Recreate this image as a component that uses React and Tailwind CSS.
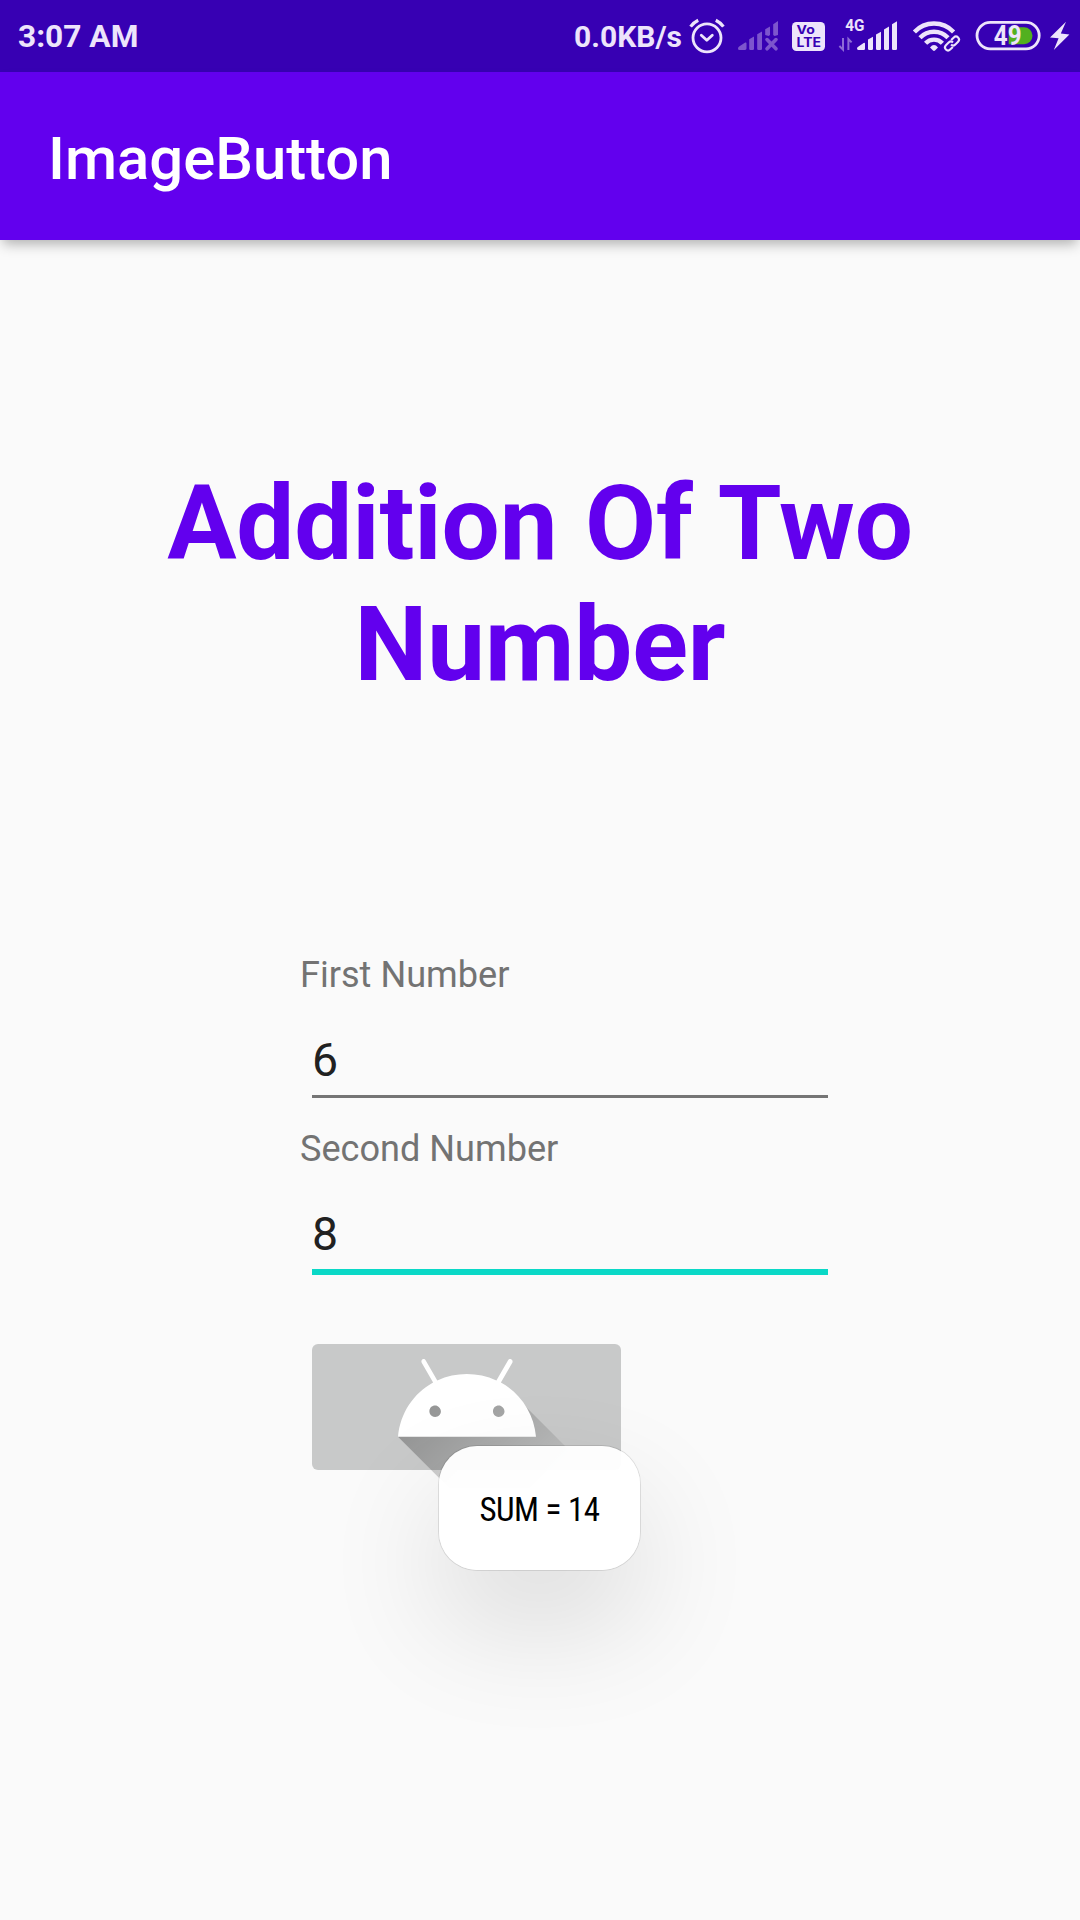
const INK = '#ede4fb';
const DIM = '#7d55cd';
const BAR = '#3700b3';

function AlarmIcon() {
  return (
    <svg className="shrink-0" width="40" height="72" viewBox="687 0 40 72" fill="none" stroke={INK}>
      <circle cx="707" cy="37.8" r="14" strokeWidth="2.8" />
      <path d="M701.3 35.2 L706.8 40.3 L712.3 35.2" strokeWidth="2.8" strokeLinecap="round" strokeLinejoin="round" />
      <path d="M690.6 26.6 C692.6 23.8 695 21.8 698.2 20.2 M715.8 20.2 C719 21.8 721.4 23.8 723.4 26.6" strokeWidth="3.2" />
    </svg>
  );
}

function NoSignalIcon() {
  return (
    <svg className="shrink-0" width="60" height="72" viewBox="727 0 60 72" fill={DIM}>
      <path d="M738 48.5 Q738 47 739.5 46.2 L745.2 42.6 Q746.5 42 746.5 43.5 V48.6 Q746.5 50 745 50 H739.5 Q738 50 738 48.5Z" />
      <path d="M749.2 39.2 L754 36.6 V48.8 Q754 50 752.8 50 H750.4 Q749.2 50 749.2 48.8Z" />
      <path d="M757.2 34.2 L762 31.6 V48.8 Q762 50 760.8 50 H758.4 Q757.2 50 757.2 48.8Z" />
      <path d="M765.2 29.2 L770 26.6 V35 L768.6 36 L765.2 35Z" />
      <path d="M773.2 24.2 L778 21 V35 L774.6 36 L773.2 35Z" />
      <path d="M767 39.6 L776 48.8 M776 39.6 L767 48.8" stroke={DIM} strokeWidth="3.6" strokeLinecap="round" />
    </svg>
  );
}

function VolteIcon() {
  return (
    <svg className="shrink-0" width="46" height="72" viewBox="787 0 46 72">
      <rect x="792" y="22" width="33" height="29" rx="4.5" fill={INK} />
      <g className="font-['Inter',sans-serif] font-bold" fill={BAR}>
        <text x="796.6" y="34.4" fontSize="12.4" textLength="18.2" lengthAdjust="spacingAndGlyphs">Vo</text>
        <text x="796.6" y="47.4" fontSize="12.8" textLength="24.4" lengthAdjust="spacingAndGlyphs">LTE</text>
      </g>
    </svg>
  );
}

function MobileSignalIcon() {
  return (
    <svg className="shrink-0" width="72" height="72" viewBox="833 0 72 72" fill={INK}>
      <text x="845.2" y="31" fontSize="15.8" textLength="19.2" lengthAdjust="spacingAndGlyphs" className="font-['Roboto',sans-serif] font-bold">4G</text>
      <path d="M843 38 V49.6 L839.4 46 M848.4 50 V39 L851.6 42.4" fill="none" stroke="#8e6bd6" strokeWidth="2" />
      <path d="M857 48.6 Q857 47.4 858.2 46.7 L863.6 43 Q865 42.3 865 43.8 V48.7 Q865 50 863.7 50 H858.3 Q857 50 857 48.6Z" />
      <path d="M868 39.4 L873 36.8 V48.8 Q873 50 871.8 50 H869.2 Q868 50 868 48.8Z" />
      <path d="M876 34.4 L881 31.8 V48.8 Q881 50 879.8 50 H877.2 Q876 50 876 48.8Z" />
      <path d="M884 29.4 L889 26.6 V48.8 Q889 50 887.8 50 H885.2 Q884 50 884 48.8Z" />
      <path d="M892 24.2 L897 21.2 V48.8 Q897 50 895.8 50 H893.2 Q892 50 892 48.8Z" />
    </svg>
  );
}

function WifiIcon() {
  return (
    <svg className="shrink-0" width="64" height="72" viewBox="905 0 64 72" fill="none">
      <g stroke={INK} strokeWidth="4.4">
        <path d="M914.4 32 A27 27 0 0 1 953.6 32" />
        <path d="M920 37.8 A19.3 19.3 0 0 1 948 37.8" />
        <path d="M925.6 43.2 A11.6 11.6 0 0 1 942.4 43.2" />
      </g>
      <path d="M930 47.4 Q934 42.6 938 47.4 L935 50.5 Q934 51.4 933 50.5Z" fill={INK} />
      <g transform="translate(952 43.5) rotate(-45)" strokeWidth="2.1">
        <rect x="-10" y="-4.8" width="20" height="9.6" rx="4.8" fill={BAR} />
        <path d="M-1.8 3 H-5.6 A3 3 0 0 1 -5.6 -3 H-1.4 A3 3 0 0 1 1.4 0" stroke={INK} />
        <path d="M1.8 -3 H5.6 A3 3 0 0 1 5.6 3 H1.4 A3 3 0 0 1 -1.4 0" stroke={INK} />
      </g>
    </svg>
  );
}

function BatteryIcon() {
  return (
    <svg className="shrink-0" width="111" height="72" viewBox="969 0 111 72">
      <rect x="977" y="22.4" width="62.2" height="26.4" rx="13.2" fill="none" stroke={INK} strokeWidth="2.8" />
      <path d="M1008.7 27.2 H1024 A8.5 8.5 0 0 1 1024 44.2 H1008.7Z" fill="#52b01f" />
      <text x="993.8" y="45" fontSize="27" textLength="27.8" lengthAdjust="spacingAndGlyphs" fill={INK} className="font-['Roboto',sans-serif] font-bold">49</text>
      <path d="M1066 21.8 L1050 37.4 L1058.6 38.2 L1053.8 50 L1069.4 34.4 L1060.8 33.6Z" fill={INK} />
    </svg>
  );
}

function StatusBar() {
  return (
    <header className="flex h-[72px] shrink-0 items-center justify-between bg-[#3700b3] text-[#ede4fb]">
      <span className="pt-[2px] pl-[18px] text-[31.7px] font-bold">3:07 AM</span>
      <div className="flex items-center">
        <span className="pt-px pr-[5px] text-[30px] font-bold">0.0KB/s</span>
        <AlarmIcon />
        <NoSignalIcon />
        <VolteIcon />
        <MobileSignalIcon />
        <WifiIcon />
        <BatteryIcon />
      </div>
    </header>
  );
}

function Field({ label, value, focused }) {
  return (
    <label className="flex flex-col">
      <span className="text-[36.12px] leading-[43px] text-[#737373]">{label}</span>
      <span
        className={
          focused
            ? 'mx-3 border-b-[6px] border-[#0ad8c6] pt-[37px] pb-2 text-[46.4px] leading-[54px] text-[#212121]'
            : 'mx-3 border-b-[3px] border-[#757575] pt-[37px] pb-2 text-[46.4px] leading-[54px] text-[#212121]'
        }
      >
        {value}
      </span>
    </label>
  );
}

function AndroidHead() {
  return (
    <svg className="shrink-0" width="324" height="162" viewBox="0 27 108 54">
      <defs>
        <linearGradient id="cast" gradientUnits="userSpaceOnUse" x1="42.9492" y1="49.59793" x2="85.84757" y2="92.4963">
          <stop offset="0" stopColor="#000" stopOpacity="0.267" />
          <stop offset="1" stopColor="#000" stopOpacity="0" />
        </linearGradient>
      </defs>
      <path fill="url(#cast)" d="M31,63.928c0,0 6.4,-11 12.1,-13.1c7.2,-2.6 26,-1.4 26,-1.4l38.1,38.1L107,108.928l-32,-1L31,63.928z" />
      <path
        fill="#fff"
        d="M65.3,45.828l3.8,-6.6c0.2,-0.4 0.1,-0.9 -0.3,-1.1c-0.4,-0.2 -0.9,-0.1 -1.1,0.3l-3.9,6.7c-6.3,-2.8 -13.4,-2.8 -19.7,0l-3.9,-6.7c-0.2,-0.4 -0.7,-0.5 -1.1,-0.3C38.8,38.328 38.7,38.828 38.9,39.228l3.8,6.6C36.2,49.428 31.7,56.028 31,63.928h46C76.3,56.028 71.8,49.428 65.3,45.828zM43.4,57.328c-0.8,0 -1.5,-0.5 -1.8,-1.2c-0.3,-0.7 -0.1,-1.5 0.4,-2.1c0.5,-0.5 1.4,-0.7 2.1,-0.4c0.7,0.3 1.2,1 1.2,1.8C45.3,56.528 44.5,57.328 43.4,57.328L43.4,57.328zM64.6,57.328c-0.8,0 -1.5,-0.5 -1.8,-1.2s-0.1,-1.5 0.4,-2.1c0.5,-0.5 1.4,-0.7 2.1,-0.4c0.7,0.3 1.2,1 1.2,1.8C66.5,56.528 65.6,57.328 64.6,57.328L64.6,57.328z"
      />
    </svg>
  );
}

export default function App() {
  return (
    <div className="relative flex h-[1920px] w-[1080px] flex-col overflow-hidden bg-[#fafafa] font-['Roboto',sans-serif]">
      <StatusBar />
      <div className="flex h-[168px] shrink-0 items-center bg-[#6200ee] px-12 pt-[7px] text-[59.8px] font-medium text-white shadow-[0_7px_12px_-3px_rgba(0,0,0,0.3)]">
        ImageButton
      </div>
      <main className="flex flex-col">
        <h1 className="mt-[223px] px-24 text-center text-[103.2px] leading-[121px] font-bold tracking-[-0.1px] text-[#6200ee] [word-spacing:2px]">
          Addition Of Two Number
        </h1>
        <form className="mt-[248px] ml-[300px] flex w-[540px] flex-col">
          <Field label="First Number" value="6" />
          <div className="h-[29px]" />
          <Field label="Second Number" value="8" focused />
          <button
            type="button"
            aria-label="Add"
            className="mt-[69px] ml-3 flex h-[126px] w-[309px] items-center justify-center rounded-[6px] bg-[#c8c9c9]"
          >
            <AndroidHead />
          </button>
        </form>
      </main>
      <div
        role="status"
        className="absolute top-[1446px] left-[439px] flex h-[124px] w-[201px] items-center justify-center rounded-[38px] bg-white/96 pt-[4px] text-[33px] tracking-[-0.5px] text-black [font-stretch:75%] shadow-[0_0_0_1px_rgba(0,0,0,0.1),0_54px_118px_2px_rgba(0,0,0,0.12)]"
      >
        SUM = 14
      </div>
    </div>
  );
}
